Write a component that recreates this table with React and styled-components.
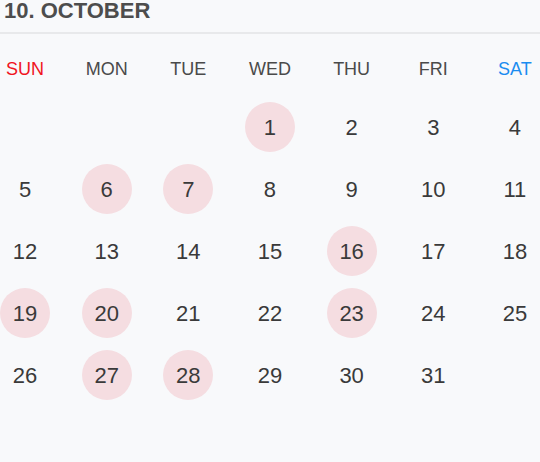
import { createGlobalStyle, styled } from 'styled-components';

const GlobalStyle = createGlobalStyle`
  html, body {
    margin: 0;
    padding: 0;
    background: #f8f9fb;
  }
  body {
    font-family: 'Liberation Sans', Arial, sans-serif;
    overflow: hidden;
  }
`;

const WEEKDAYS = ['SUN', 'MON', 'TUE', 'WED', 'THU', 'FRI', 'SAT'];
const MARKED = [1, 6, 7, 16, 19, 20, 23, 27, 28];

// October starts on Wednesday
const buildWeeks = () => {
  const cells = [null, null, null];
  for (let d = 1; d <= 31; d++) cells.push(d);
  while (cells.length % 7) cells.push(null);
  const weeks = [];
  for (let i = 0; i < cells.length; i += 7) weeks.push(cells.slice(i, i + 7));
  return weeks;
};

const App = () => {
  const weeks = buildWeeks();

  return (
    <>
      <GlobalStyle />
      <Calendar>
        <Header>
          <Title>10. OCTOBER</Title>
        </Header>
        <WeekRow>
          {WEEKDAYS.map((w, i) => (
            <WeekDay key={w} $tone={i === 0 ? 'sun' : i === 6 ? 'sat' : 'plain'}>
              {w}
            </WeekDay>
          ))}
        </WeekRow>
        <Days>
          {weeks.map((week, wi) => (
            <Row key={wi}>
              {week.map((d, di) => (
                <Day key={di} $marked={d && MARKED.includes(d)}>
                  {d}
                </Day>
              ))}
            </Row>
          ))}
        </Days>
      </Calendar>
    </>
  );
};

const Calendar = styled.div`
  width: 540px;
  height: 462px;
  display: flex;
  flex-direction: column;
  background: #f8f9fb;
  color: #3a3a3a;
`;

const Header = styled.div`
  height: 32px;
  border-bottom: 2px solid #e8e9eb;
  display: flex;
  align-items: flex-start;
`;

const Title = styled.h2`
  margin: 0 0 0 4px;
  font-size: 22px;
  line-height: 22px;
  font-weight: 700;
  color: #4d4d4d;
`;

const WeekRow = styled.div`
  display: flex;
  justify-content: space-between;
  margin-top: 10px;
  height: 50px;
`;

const WeekDay = styled.div`
  width: 50px;
  display: flex;
  align-items: center;
  justify-content: center;
  font-size: 18px;
  color: ${({ $tone }) =>
    $tone === 'sun' ? '#f0141e' : $tone === 'sat' ? '#1a8cf0' : '#4a4a4a'};
`;

const Days = styled.div`
  display: flex;
  flex-direction: column;
  gap: 12px;
  margin-top: 8px;
`;

const Row = styled.div`
  display: flex;
  justify-content: space-between;
`;

const Day = styled.div`
  width: 50px;
  height: 50px;
  border-radius: 50%;
  display: flex;
  align-items: center;
  justify-content: center;
  font-size: 22px;
  line-height: 1;
  padding-top: 2px;
  box-sizing: border-box;
  color: #3a3a3a;
  background: ${({ $marked }) => ($marked ? '#f5dde1' : 'transparent')};
`;

export default App;
